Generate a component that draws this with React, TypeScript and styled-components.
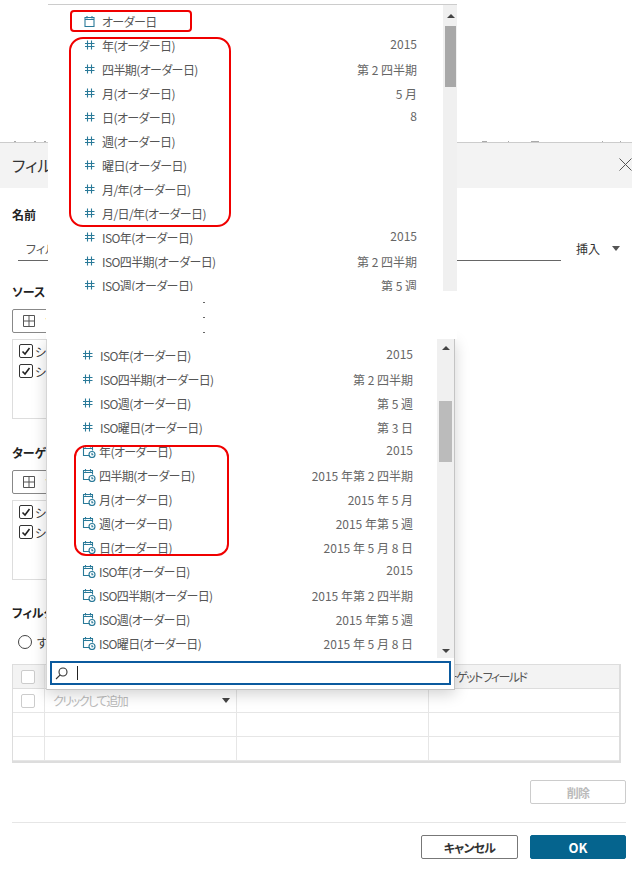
import React from "react";
import styled, { createGlobalStyle } from "styled-components";

const GlobalStyle = createGlobalStyle`
  html, body {
    margin: 0;
    padding: 0;
    background: #fff;
  }
  body {
    font-family: "Noto Sans CJK JP", "Noto Sans", sans-serif;
    font-size: 12px;
    color: #333;
    font-feature-settings: "palt";
  }
`;

const Page = styled.div`
  position: relative;
  width: 632px;
  height: 870px;
  overflow: hidden;
  background: #fff;
`;

const Dialog = styled.div`
  display: flex;
  flex-direction: column;
  margin-top: 141px;
  height: 729px;
  box-sizing: border-box;
`;

/* tops of whatever sits behind the dialog */
const TickStrip = styled.div`
  display: flex;
  height: 1px;
  flex: none;
`;

const TickMark = styled.span<{ $gap: number; $w: number }>`
  margin-left: ${(p) => p.$gap}px;
  width: ${(p) => p.$w}px;
  height: 1px;
  background: #aaa;
`;

const Header = styled.div`
  display: flex;
  align-items: center;
  justify-content: space-between;
  height: 46px;
  flex: none;
  box-sizing: border-box;
  padding: 0 0 2px 12px;
  background: #f3f3f3;
  border-top: 1px solid #ccc;
`;

const Title = styled.div`
  font-size: 16px;
  color: #333;
`;

const Close = styled.svg`
  width: 13px;
  height: 13px;
  stroke: #555;
  stroke-width: 1;
  fill: none;
`;

const Body = styled.div`
  display: flex;
  flex-direction: column;
  padding: 0 6px 0 12px;
`;

const SectionLabel = styled.div<{ $top: number }>`
  margin-top: ${(p) => p.$top}px;
  height: 18px;
  line-height: 18px;
  font-weight: 700;
  font-size: 12px;
  color: #222;
`;

const NameRow = styled.div`
  display: flex;
  align-items: flex-end;
  margin-top: 12px;
  height: 25px;
`;

const NameInput = styled.div`
  width: 543px;
  margin-left: 6px;
  height: 25px;
  box-sizing: border-box;
  padding: 3px 0 0 8px;
  line-height: 20px;
  border-bottom: 1px solid #666;
  color: #555;
`;

const InsertLabel = styled.div`
  margin-left: 15px;
  height: 25px;
  box-sizing: border-box;
  padding-top: 3px;
  line-height: 20px;
  color: #333;
`;

const InsertCaret = styled.div`
  margin: 0 0 10px 12px;
  width: 0;
  height: 0;
  border-left: 4px solid transparent;
  border-right: 4px solid transparent;
  border-top: 5px solid #555;
`;

const SourceSelect = styled.div`
  display: flex;
  align-items: center;
  gap: 10px;
  margin-top: 8px;
  width: 420px;
  height: 24px;
  box-sizing: border-box;
  padding-left: 10px;
  border: 1px solid #888;
  border-radius: 2px;
  color: #d9822b;
`;

const SheetList = styled.div`
  display: flex;
  flex-direction: column;
  gap: 6px;
  margin-top: 6px;
  width: 420px;
  height: 80px;
  box-sizing: border-box;
  padding: 4px 0 0 6px;
  border: 1px solid #ddd;
`;

const SheetItem = styled.label`
  display: flex;
  align-items: center;
  gap: 2px;
  height: 14px;
  font-size: 12px;
  color: #333;
`;

const CheckBox = styled.span<{ $checked?: boolean }>`
  display: flex;
  align-items: center;
  justify-content: center;
  width: 14px;
  height: 14px;
  flex: none;
  box-sizing: border-box;
  border: 1px solid ${(p) => (p.$checked ? "#333" : "#ccc")};
  border-radius: 2px;
  background: #fff;
`;

const RadioRow = styled.div`
  display: flex;
  align-items: center;
  gap: 5px;
  margin: 11px 0 0 6px;
  height: 18px;
`;

const RadioDot = styled.span`
  width: 14px;
  height: 14px;
  box-sizing: border-box;
  border: 1px solid #444;
  border-radius: 50%;
`;

const Grid = styled.div`
  display: grid;
  grid-template-columns: 32px 192px 192px 1fr;
  grid-auto-rows: 24px;
  margin-top: 13px;
  width: 609px;
  box-sizing: border-box;
  border: 1px solid #ddd;
  border-bottom-width: 2px;
  border-right-width: 2px;
`;

const Cell = styled.div<{ $head?: boolean }>`
  display: flex;
  align-items: center;
  box-sizing: border-box;
  padding-left: 8px;
  border-right: 1px solid #e6e6e6;
  border-bottom: 1px solid ${(p) => (p.$head ? "#ddd" : "#e6e6e6")};
  background: ${(p) => (p.$head ? "#f3f3f3" : "#fff")};
  color: #555;
  letter-spacing: ${(p) => (p.$head ? "-1.6px" : "0")};
  &:nth-child(4n) {
    border-right: none;
  }
`;

const Placeholder = styled.span`
  flex: 1;
  color: #bbb;
  letter-spacing: -1.4px;
`;

const SmallCaret = styled.span`
  margin-right: 6px;
  width: 0;
  height: 0;
  border-left: 4px solid transparent;
  border-right: 4px solid transparent;
  border-top: 5px solid #444;
`;

const DeleteRow = styled.div`
  display: flex;
  justify-content: flex-end;
  margin-top: 17px;
`;

const Button = styled.button<{ $variant: "disabled" | "outline" | "primary" }>`
  width: ${(p) => (p.$variant === "outline" ? 97 : 96)}px;
  height: 24px;
  padding: 0;
  font-family: inherit;
  font-feature-settings: inherit;
  font-size: ${(p) => (p.$variant === "primary" ? 13 : 12)}px;
  font-weight: 700;
  letter-spacing: ${(p) => (p.$variant === "primary" ? "0" : "-0.8px")};
  border-radius: 2px;
  border: 1px solid
    ${(p) =>
      p.$variant === "disabled" ? "#ccc" : p.$variant === "outline" ? "#777" : "#05648e"};
  background: ${(p) => (p.$variant === "primary" ? "#05648e" : "#fff")};
  color: ${(p) =>
    p.$variant === "disabled" ? "#bbb" : p.$variant === "primary" ? "#fff" : "#333"};
`;

const Footer = styled.div`
  display: flex;
  justify-content: flex-end;
  gap: 12px;
  margin-top: 18px;
  padding-top: 12px;
  border-top: 1px solid #e6e6e6;
`;

/* dropdown collage lying over the dialog */
const Overlay = styled.div`
  position: absolute;
  left: 46px;
  top: 4px;
  width: 411px;
  display: flex;
  flex-direction: column;
`;

const TopPanel = styled.div`
  position: relative;
  display: flex;
  margin-left: 2px;
  width: 409px;
  height: 287px;
  box-sizing: border-box;
  background: #fff;
  border-top: 1px solid #ccc;
  z-index: 2;
`;

const Gap = styled.div`
  position: relative;
  z-index: 2;
  display: flex;
  flex-direction: column;
  height: 48px;
  box-sizing: border-box;
  padding: 11px 0 0 157px;
  gap: 14px;
  background: #fff;
`;

const GapDot = styled.span`
  width: 2px;
  height: 1px;
  background: #666;
`;

const BottomPanel = styled.div`
  position: relative;
  z-index: 1;
  display: flex;
  flex-direction: column;
  width: 409px;
  height: 351px;
  box-sizing: border-box;
  background: #fff;
  border-left: 1px solid #d5d5d5;
  border-right: 1px solid #c4c4c4;
  border-bottom: 1px solid #c4c4c4;
  box-shadow: 0 4px 14px rgba(0, 0, 0, 0.18);
`;

const BottomBody = styled.div`
  display: flex;
  height: 319px;
`;

const List = styled.div<{ $pad: number; $left: number; $right: number }>`
  flex: 1;
  display: flex;
  flex-direction: column;
  min-width: 0;
  overflow: hidden;
  padding: ${(p) => p.$pad}px ${(p) => p.$right}px 0 ${(p) => p.$left}px;
`;

const Row = styled.div`
  display: flex;
  align-items: center;
  height: 24px;
  flex: none;
  color: #555;
`;

const RowIcon = styled.svg<{ $wide?: boolean }>`
  width: ${(p) => (p.$wide ? 14 : 11)}px;
  height: 14px;
  flex: none;
  margin-right: ${(p) => (p.$wide ? 3 : 7)}px;
  fill: none;
  stroke: #2a7a99;
  stroke-width: 1.1;
`;

const RowLabel = styled.span`
  flex: 1;
  white-space: nowrap;
  letter-spacing: -0.6px;
`;

const RowValue = styled.span<{ $digits?: boolean }>`
  white-space: nowrap;
  color: #666;
  padding-bottom: ${(p) => (p.$digits ? 4 : 0)}px;
`;

const ScrollTrack = styled.div<{ $width: number; $inset: number }>`
  display: flex;
  flex-direction: column;
  flex: none;
  width: ${(p) => p.$width}px;
  box-sizing: border-box;
  padding: 0 ${(p) => p.$inset}px 0 2px;
  background: #f0f0f0;
`;

const ScrollSpace = styled.div<{ $h: number }>`
  height: ${(p) => p.$h}px;
  flex: none;
  display: flex;
  align-items: center;
  justify-content: center;
`;

const ScrollThumb = styled.div<{ $h: number; $color: string }>`
  height: ${(p) => p.$h}px;
  flex: none;
  background: ${(p) => p.$color};
`;

const Arrow = styled.span<{ $down?: boolean }>`
  width: 0;
  height: 0;
  border-left: 4px solid transparent;
  border-right: 4px solid transparent;
  ${(p) =>
    p.$down ? "border-top: 4px solid #444;" : "border-bottom: 4px solid #444;"}
`;

const SearchBox = styled.div`
  display: flex;
  align-items: center;
  margin: 3px 3px 0 3px;
  height: 24px;
  box-sizing: border-box;
  padding-left: 3px;
  border: 2px solid #0b5a9e;
`;

const SearchIcon = styled.svg`
  width: 13px;
  height: 13px;
  fill: none;
  stroke: #333;
  stroke-width: 1.1;
`;

const TextCaret = styled.span`
  margin-left: 9px;
  width: 1px;
  height: 14px;
  background: #222;
`;

const Highlight = styled.div<{ $x: number; $y: number; $w: number; $h: number; $r: number }>`
  position: absolute;
  left: ${(p) => p.$x}px;
  top: ${(p) => p.$y}px;
  width: ${(p) => p.$w}px;
  height: ${(p) => p.$h}px;
  box-sizing: border-box;
  border: 2px solid #f00000;
  border-radius: ${(p) => p.$r}px;
  pointer-events: none;
`;

type Item = { icon: "cal" | "hash" | "clock"; label: string; value?: string; digits?: boolean };

const topItems: Item[] = [
  { icon: "cal", label: "オーダー日" },
  { icon: "hash", label: "年(オーダー日)", value: "2015", digits: true },
  { icon: "hash", label: "四半期(オーダー日)", value: "第 2 四半期" },
  { icon: "hash", label: "月(オーダー日)", value: "5 月" },
  { icon: "hash", label: "日(オーダー日)", value: "8", digits: true },
  { icon: "hash", label: "週(オーダー日)" },
  { icon: "hash", label: "曜日(オーダー日)" },
  { icon: "hash", label: "月/年(オーダー日)" },
  { icon: "hash", label: "月/日/年(オーダー日)" },
  { icon: "hash", label: "ISO年(オーダー日)", value: "2015", digits: true },
  { icon: "hash", label: "ISO四半期(オーダー日)", value: "第 2 四半期" },
  { icon: "hash", label: "ISO週(オーダー日)", value: "第 5 週" },
];

const bottomItems: Item[] = [
  { icon: "hash", label: "ISO年(オーダー日)", value: "2015", digits: true },
  { icon: "hash", label: "ISO四半期(オーダー日)", value: "第 2 四半期" },
  { icon: "hash", label: "ISO週(オーダー日)", value: "第 5 週" },
  { icon: "hash", label: "ISO曜日(オーダー日)", value: "第 3 日" },
  { icon: "clock", label: "年(オーダー日)", value: "2015", digits: true },
  { icon: "clock", label: "四半期(オーダー日)", value: "2015 年第 2 四半期" },
  { icon: "clock", label: "月(オーダー日)", value: "2015 年 5 月" },
  { icon: "clock", label: "週(オーダー日)", value: "2015 年第 5 週" },
  { icon: "clock", label: "日(オーダー日)", value: "2015 年 5 月 8 日" },
  { icon: "clock", label: "ISO年(オーダー日)", value: "2015", digits: true },
  { icon: "clock", label: "ISO四半期(オーダー日)", value: "2015 年第 2 四半期" },
  { icon: "clock", label: "ISO週(オーダー日)", value: "2015 年第 5 週" },
  { icon: "clock", label: "ISO曜日(オーダー日)", value: "2015 年 5 月 8 日" },
];

const ItemIcon = ({ kind }: { kind: Item["icon"] }) => {
  if (kind === "hash") {
    return (
      <RowIcon viewBox="0 0 11 14">
        <path d="M3.5 2.5v9M7.5 2.5v9M1 5.5h9.5M1 8.5h9.5" />
      </RowIcon>
    );
  }
  if (kind === "cal") {
    return (
      <RowIcon viewBox="0 0 11 14">
        <path d="M1 3.5h9v9H1zM1 5.5h9M3 2v2.5M8 2v2.5" />
      </RowIcon>
    );
  }
  return (
    <RowIcon $wide viewBox="0 0 14 14">
      <path d="M7.5 11.5H1.5v-9h9v4M1.5 4.5h9M3.5 1v2.5M8.5 1v2.5" />
      <circle cx="10" cy="10.5" r="3" />
      <path d="M10 9v1.7h1.4" />
    </RowIcon>
  );
};

const ItemRow = ({ item }: { item: Item }) => (
  <Row>
    <ItemIcon kind={item.icon} />
    <RowLabel>{item.label}</RowLabel>
    {item.value && <RowValue $digits={item.digits}>{item.value}</RowValue>}
  </Row>
);

const GridIcon = () => (
  <svg width="12" height="12" viewBox="0 0 12 12" fill="none" stroke="#555">
    <path d="M.5.5h11v11H.5zM6 .5v11M.5 6h11" />
  </svg>
);

const Tick = () => (
  <svg width="10" height="10" viewBox="0 0 10 10" fill="none" stroke="#222" strokeWidth="1.6">
    <path d="M1.5 5.5l2.5 2.5 4.5-6" />
  </svg>
);

const SheetBox = () => (
  <SheetList>
    <SheetItem>
      <CheckBox $checked>
        <Tick />
      </CheckBox>
      シート 1
    </SheetItem>
    <SheetItem>
      <CheckBox $checked>
        <Tick />
      </CheckBox>
      シート 2
    </SheetItem>
  </SheetList>
);

export default function App() {
  return (
    <Page>
      <GlobalStyle />
      <Dialog>
        <TickStrip>
          <TickMark $gap={14} $w={2} />
          <TickMark $gap={18} $w={2} />
          <TickMark $gap={8} $w={2} />
          <TickMark $gap={436} $w={5} />
          <TickMark $gap={21} $w={1} />
          <TickMark $gap={22} $w={8} />
          <TickMark $gap={63} $w={1} />
          <TickMark $gap={17} $w={1} />
        </TickStrip>
        <Header>
          <Title>フィルター アクションの編集</Title>
          <Close viewBox="0 0 13 13">
            <path d="M.5.5l12 12M12.5.5l-12 12" />
          </Close>
        </Header>
        <Body>
          <SectionLabel $top={18}>名前</SectionLabel>
          <NameRow>
            <NameInput>フィルター 1</NameInput>
            <InsertLabel>挿入</InsertLabel>
            <InsertCaret />
          </NameRow>
          <SectionLabel $top={22}>ソース シート</SectionLabel>
          <SourceSelect>
            <GridIcon />
            ソース
          </SourceSelect>
          <SheetBox />
          <SectionLabel $top={25}>ターゲット シート</SectionLabel>
          <SourceSelect>
            <GridIcon />
            ソース
          </SourceSelect>
          <SheetBox />
          <SectionLabel $top={24}>フィルター</SectionLabel>
          <RadioRow>
            <RadioDot />
            すべてのフィールド
          </RadioRow>
          <Grid>
            <Cell $head>
              <CheckBox />
            </Cell>
            <Cell $head>ソース フィールド</Cell>
            <Cell $head />
            <Cell $head>ターゲット フィールド</Cell>
            <Cell>
              <CheckBox />
            </Cell>
            <Cell>
              <Placeholder>クリックして追加</Placeholder>
              <SmallCaret />
            </Cell>
            <Cell />
            <Cell />
            <Cell />
            <Cell />
            <Cell />
            <Cell />
            <Cell />
            <Cell />
            <Cell />
            <Cell />
          </Grid>
          <DeleteRow>
            <Button $variant="disabled">削除</Button>
          </DeleteRow>
          <Footer>
            <Button $variant="outline">キャンセル</Button>
            <Button $variant="primary">OK</Button>
          </Footer>
        </Body>
      </Dialog>

      <Overlay>
        <TopPanel>
          <List $pad={4} $left={36} $right={26}>
            {topItems.map((item) => (
              <ItemRow key={item.label} item={item} />
            ))}
          </List>
          <ScrollTrack $width={14} $inset={1}>
            <ScrollSpace $h={21}>
              <Arrow />
            </ScrollSpace>
            <ScrollThumb $h={61} $color="#a8a8a8" />
          </ScrollTrack>
          <Highlight $x={22} $y={5} $w={122} $h={22} $r={4} />
          <Highlight $x={21} $y={32} $w={162} $h={190} $r={14} />
        </TopPanel>
        <Gap>
          <GapDot />
          <GapDot />
          <GapDot />
        </Gap>
        <BottomPanel>
          <BottomBody>
            <List $pad={4} $left={35} $right={24}>
              {bottomItems.map((item) => (
                <ItemRow key={item.label} item={item} />
              ))}
            </List>
            <ScrollTrack $width={17} $inset={2}>
              <ScrollSpace $h={18}>
                <Arrow />
              </ScrollSpace>
              <ScrollSpace $h={44} />
              <ScrollThumb $h={61} $color="#bbb" />
              <ScrollSpace $h={182} />
              <ScrollSpace $h={14}>
                <Arrow $down />
              </ScrollSpace>
            </ScrollTrack>
          </BottomBody>
          <SearchBox>
            <SearchIcon viewBox="0 0 13 13">
              <circle cx="8" cy="5" r="4" />
              <path d="M5.2 7.8L1 12" />
            </SearchIcon>
            <TextCaret />
          </SearchBox>
          <Highlight $x={27} $y={106} $w={155} $h={111} $r={12} />
        </BottomPanel>
      </Overlay>
    </Page>
  );
}
